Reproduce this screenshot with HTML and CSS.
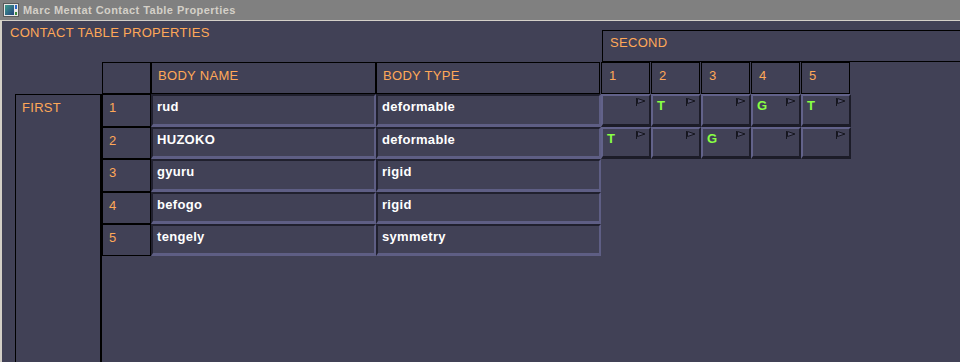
FILE: index.html
```html
<!DOCTYPE html>
<html>
<head>
    <meta charset="UTF-8">
    <title>Marc Mentat Contact Table Properties</title>
    <link rel="stylesheet" href="styles.css">
</head>
<body>
    <div class="window">
        <div class="titlebar">
            <svg class="app-icon" width="16" height="14" viewBox="0 0 16 14">
                <defs>
                    <linearGradient id="ig" x1="0" y1="0" x2="1" y2="1">
                        <stop offset="0" stop-color="#3f9c8c"/>
                        <stop offset="1" stop-color="#23427e"/>
                    </linearGradient>
                </defs>
                <rect x="0.5" y="0.5" width="15" height="13" fill="#e8e8e8" stroke="#5a5a5a"/>
                <rect x="2" y="2" width="9" height="10" fill="url(#ig)"/>
                <rect x="12" y="2" width="2" height="4" fill="#2a66c8"/>
                <rect x="12" y="9" width="2" height="3" fill="#3a8a3a"/>
            </svg>
            <span class="title-text">Marc Mentat Contact Table Properties</span>
        </div>

        <div class="client">
            <div class="heading">CONTACT TABLE PROPERTIES</div>
            <div class="second">SECOND</div>

            <div class="box corner"></div>
            <div class="box colhead">BODY NAME</div>
            <div class="box colhead type-head">BODY TYPE</div>
            <div class="col-nums">
                <div class="box colnum">1</div>
                <div class="box colnum">2</div>
                <div class="box colnum">3</div>
                <div class="box colnum">4</div>
                <div class="box colnum">5</div>
            </div>

            <div class="first">FIRST</div>

            <div class="rows">
                <div class="row">
                    <div class="box rownum">1</div>
                    <div class="field">rud</div>
                    <div class="field">deformable</div>
                    <div class="contacts">
                        <div class="btn"></div>
                        <div class="btn">T</div>
                        <div class="btn"></div>
                        <div class="btn">G</div>
                        <div class="btn">T</div>
                    </div>
                </div>
                <div class="row">
                    <div class="box rownum">2</div>
                    <div class="field">HUZOKO</div>
                    <div class="field">deformable</div>
                    <div class="contacts">
                        <div class="btn">T</div>
                        <div class="btn"></div>
                        <div class="btn">G</div>
                        <div class="btn"></div>
                        <div class="btn"></div>
                    </div>
                </div>
                <div class="row">
                    <div class="box rownum">3</div>
                    <div class="field">gyuru</div>
                    <div class="field">rigid</div>
                </div>
                <div class="row">
                    <div class="box rownum">4</div>
                    <div class="field">befogo</div>
                    <div class="field">rigid</div>
                </div>
                <div class="row">
                    <div class="box rownum">5</div>
                    <div class="field">tengely</div>
                    <div class="field">symmetry</div>
                </div>
            </div>
        </div>
    </div>

    <script>
        // little flag marker in the corner of every contact button
        var flag = '<svg class="flag" width="10" height="8" viewBox="0 0 10 8">' +
            '<rect x="0" y="0" width="1" height="8" fill="#16161f"/>' +
            '<path d="M1.5 0.5 L9 3 L1.5 5.5 Z" fill="#50506a" stroke="#16161f" stroke-width="1"/>' +
            '</svg>';
        document.querySelectorAll(".btn").forEach(function(b) {
            b.insertAdjacentHTML("beforeend", flag);
        });
    </script>
</body>
</html>
```

FILE: styles.css
```css
body {
    margin: 0;
    background-color: #d4d0c8;
    font-family: "Liberation Sans", Arial, sans-serif;
    font-size: 13px;
    overflow: hidden;
}
.window {
    width: 960px;
    height: 362px;
    display: flex;
    flex-direction: column;
}
.titlebar {
    height: 20px;
    background-color: #808080;
    display: flex;
    align-items: center;
    padding-left: 3px;
    gap: 4px;
}
.app-icon {
    display: block;
}
.title-text {
    color: #d4d0c8;
    font-weight: bold;
    font-size: 11px;
    letter-spacing: 0.45px;
}
.client {
    flex: 1;
    margin-left: 2px;
    border-top: 1px solid #d4d0c8;
    background-color: #414156;
    display: grid;
    grid-template-columns: 13px 87px 49px 225px 225px 250px 1fr;
    grid-template-rows: 9px 32px 32px 162px 1fr;
    letter-spacing: 0.3px;
}
.heading {
    grid-column: 1 / 6;
    grid-row: 1 / 3;
    padding: 4px 0 0 8px;
    color: #ffa858;
}
.second {
    grid-column: 6 / 8;
    grid-row: 2;
    margin-left: 1px;
    border: 1px solid #000;
    border-right: none;
    padding: 4px 0 0 7px;
    color: #ffa858;
}
.box {
    border: 1px solid #000;
    box-sizing: border-box;
    color: #ffa858;
}
.corner {
    grid-column: 3;
    grid-row: 3;
}
.colhead {
    grid-column: 4;
    grid-row: 3;
    padding: 5px 0 0 6px;
}
.type-head {
    grid-column: 5;
    margin-right: 1px;
}
.col-nums {
    grid-column: 6;
    grid-row: 3;
    display: flex;
    gap: 1px;
}
.colnum {
    width: 49px;
    padding: 5px 0 0 7px;
}
.first {
    grid-column: 2;
    grid-row: 4 / 6;
    border: 1px solid #000;
    border-right-width: 2px;
    border-bottom: none;
    padding: 5px 0 0 6px;
    color: #ffa858;
}
.rows {
    grid-column: 3 / 7;
    grid-row: 4;
    display: grid;
    grid-template-rows: 33px 32px 33px 32px 32px;
}
.row {
    display: grid;
    grid-template-columns: 49px 225px 225px 250px;
}
.rownum {
    padding: 5px 0 0 6px;
}
.field {
    border-style: solid;
    border-width: 2px 2px 3px 2px;
    border-color: #20202e #5e5e84 #5e5e84 #20202e;
    padding: 3px 0 0 4px;
    color: #fff;
    font-weight: bold;
}
.contacts {
    display: flex;
}
.btn {
    position: relative;
    width: 50px;
    box-sizing: border-box;
    border-style: solid;
    border-width: 2px 2px 3px 2px;
    border-color: #62628a #1c1c28 #1c1c28 #62628a;
    padding: 2px 0 0 4px;
    color: #88ff44;
    font-weight: bold;
}
.flag {
    position: absolute;
    top: 2px;
    right: 3px;
}
```
